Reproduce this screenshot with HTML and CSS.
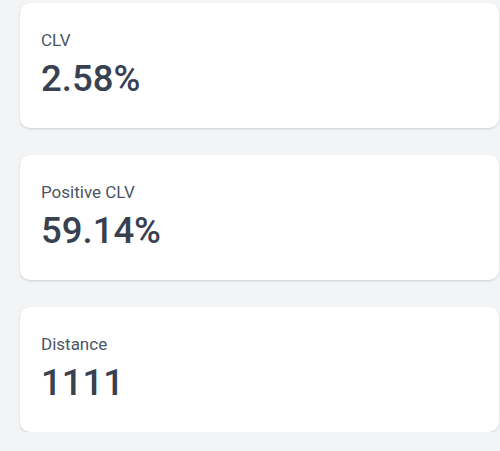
FILE: index.html
```html
<!DOCTYPE html>
<html>
<head>
<meta charset="utf-8">
<link rel="stylesheet" href="styles.css">
</head>
<body>
<div class="list">
  <div class="card">
    <div class="label">CLV</div>
    <div class="value">2.58%</div>
  </div>
  <div class="card">
    <div class="label">Positive CLV</div>
    <div class="value">59.14%</div>
  </div>
  <div class="card">
    <div class="label">Distance</div>
    <div class="value">1111</div>
  </div>
</div>
</body>
</html>
```
FILE: styles.css
```css
html, body {
  margin: 0;
  background: #f3f4f6;
  font-family: Roboto, "Noto Sans", sans-serif;
}
.list {
  display: flex;
  flex-direction: column;
  gap: 27px;
  padding: 3px 1px 0 20px;
}
.card {
  background: #fff;
  border-radius: 10px;
  box-shadow: 0 1px 3px rgba(0,0,0,0.1), 0 1px 2px rgba(0,0,0,0.06);
  height: 125px;
  box-sizing: border-box;
  padding: 25px 21px;
}
.label {
  font-size: 17px;
  line-height: 24px;
  color: #4b5563;
  font-weight: 400;
}
.value {
  margin-top: 7px;
  font-size: 36.5px;
  line-height: 40px;
  color: #374151;
  font-weight: 500;
}
```
